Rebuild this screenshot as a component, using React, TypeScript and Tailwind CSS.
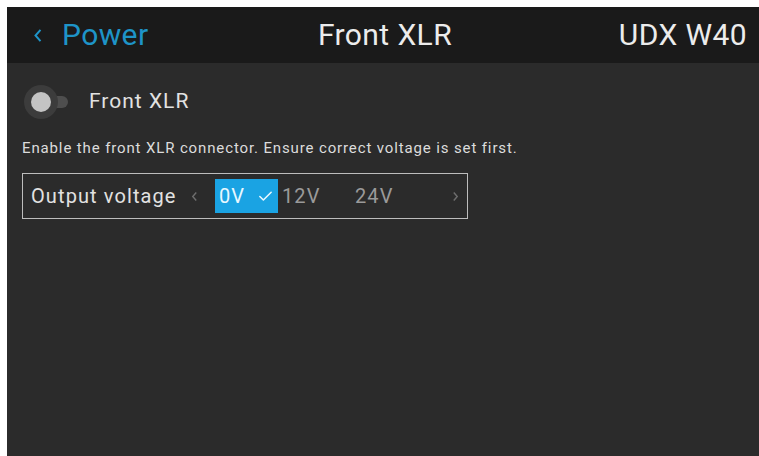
import { Check } from "lucide-react";

const font = { fontFamily: "Roboto, 'Liberation Sans', sans-serif" };

const Chevron = ({ dir, className }: { dir: "left" | "right"; className?: string }) => (
  <svg viewBox="0 0 8 12" className={className} fill="none" stroke="currentColor" strokeWidth={1.6}>
    {dir === "left" ? <path d="M6 1.5 L2 6 L6 10.5" /> : <path d="M2 1.5 L6 6 L2 10.5" />}
  </svg>
);

export default function App() {
  return (
    <div className="w-[759px] h-[456px] bg-white pt-[7px] pl-[7px] overflow-hidden" style={font}>
      <div className="w-full h-full flex flex-col bg-[#2b2b2b]">
        {/* top bar */}
        <div className="h-[56px] shrink-0 bg-[#1a1a1a] flex items-center justify-between pl-[26px] pr-[12px] text-[30px] tracking-[0.4px] leading-none">
          <div className="flex items-center text-[#1e94c8] w-[250px]">
            <Chevron dir="left" className="w-[10px] h-[15px]" />
            <span className="ml-[19px]">Power</span>
          </div>
          <span className="text-[#ececec]">Front XLR</span>
          <span className="text-[#ececec] w-[260px] text-right">UDX W40</span>
        </div>

        <div className="flex flex-col pl-[15px]">
          {/* toggle row */}
          <div className="flex items-center h-[52px] mt-[13px] -mb-[3px]">
            <div className="relative w-[48px] h-[34px] flex items-center">
              <div className="absolute left-[20px] w-[26px] h-[12px] rounded-full bg-[#4e4e4e]" />
              <div className="absolute left-[2px] w-[34px] h-[34px] rounded-full bg-[#3c3c3c]" />
              <div className="absolute left-[9px] w-[20px] h-[20px] rounded-full bg-[#c4c4c4]" />
            </div>
            <span className="ml-[19px] text-[21px] tracking-[1px] text-[#e2e2e2]">Front XLR</span>
          </div>

          <p className="text-[15px] tracking-[0.87px] text-[#dcdcdc] mt-[14px] leading-[18px]">
            Enable the front XLR connector. Ensure correct voltage is set first.
          </p>

          {/* output voltage selector */}
          <div className="mt-[16px] w-[446px] h-[46px] border border-[#bdbdbd] flex items-center pl-[8px] text-[20px] tracking-[1.1px]">
            <span className="text-[#e2e2e2] w-[146px] whitespace-nowrap">Output voltage</span>
            <Chevron dir="left" className="ml-[14px] w-[7px] h-[11px] text-[#6e6e6e]" />
            <div className="ml-[17px] w-[63px] h-[34px] bg-[#1aa3e3] flex items-center pl-[4px] text-[#e8f8ff]">
              <span>0V</span>
              <Check className="ml-[12px] w-[17px] h-[17px]" strokeWidth={2.2} />
            </div>
            <span className="ml-[4px] w-[40px] text-[#9a9a9a]">12V</span>
            <span className="ml-[33px] w-[40px] text-[#9a9a9a]">24V</span>
            <Chevron dir="right" className="ml-[57px] w-[7px] h-[11px] text-[#6e6e6e]" />
          </div>
        </div>
      </div>
    </div>
  );
}
